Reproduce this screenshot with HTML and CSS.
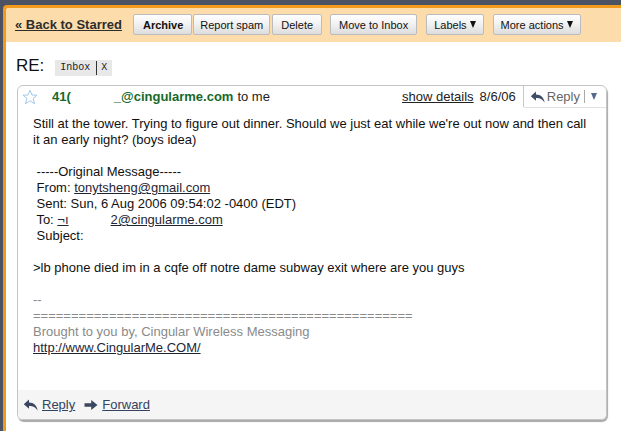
FILE: index.html
```html
<!DOCTYPE html>
<html>
<head>
<meta charset="utf-8">
<link rel="stylesheet" href="styles.css">
</head>
<body>
<div class="frame">
  <div class="shell">
    <div class="page">
      <div class="toolbar">
        <a class="back" href="#">« Back to Starred</a>
        <div class="group">
          <span class="btn bold">Archive</span><span class="btn">Report spam</span><span class="btn del">Delete</span>
        </div>
        <span class="btn wide move">Move to Inbox</span>
        <span class="btn wide">Labels <i class="tri"></i></span>
        <span class="btn wide">More actions <i class="tri"></i></span>
      </div>
      <div class="content">
        <div class="subject">
          <span class="re">RE:</span>
          <span class="chip">Inbox<span class="bar"></span>X</span>
        </div>
        <div class="card">
          <div class="head">
            <svg class="star" width="16" height="16" viewBox="0 0 16 16"><polygon points="8,1.2 10,6 15,6.2 11.1,9.4 12.6,14.8 8,11.8 3.4,14.8 4.9,9.4 1,6.2 6,6" fill="none" stroke="#a3c6ea" stroke-width="1"/></svg>
            <span class="sender">41(<span class="gap"></span>_@cingularme.com</span>
            <span class="tome">to me</span>
            <span class="spacer"></span>
            <a class="details" href="#">show details</a>
            <span class="date">8/6/06</span>
            <span class="replybtn">
              <svg width="16" height="14" viewBox="0 0 16 14"><path d="M6 1.5 L0.8 6.2 L6 10.8 V8 C10 8 12.6 9.2 14.6 12.8 C14.2 7.6 10.8 4.4 6 4.4 Z" fill="#3f4d66"/></svg>
              <span class="rtxt">Reply</span>
              <span class="vsep"></span>
              <i class="tri blue"></i>
            </span>
          </div>
          <div class="body">
            <p class="para">Still at the tower. Trying to figure out dinner. Should we just eat while we're out now and then call it an early night? (boys idea)</p>
            <div class="block">
              <div class="ln"> -----Original Message-----</div>
              <div class="ln"> From: <a href="#">tonytsheng@gmail.com</a></div>
              <div class="ln"> Sent: Sun, 6 Aug 2006 09:54:02 -0400 (EDT)</div>
              <div class="ln"> To: <a href="#">¬ı</a><span class="gap2"></span><a href="#">2@cingularme.com</a></div>
              <div class="ln"> Subject:</div>
            </div>
            <div class="block">
              <div class="ln">&gt;lb phone died im in a cqfe off notre dame subway exit where are you guys</div>
            </div>
            <div class="sig">
              <div class="ln grey">--</div>
              <div class="ln grey">==================================================</div>
              <div class="ln grey">Brought to you by, Cingular Wireless Messaging</div>
              <div class="ln"><a href="#">http://www.CingularMe.COM/</a></div>
            </div>
          </div>
          <div class="foot">
            <svg width="16" height="14" viewBox="0 0 16 14"><path d="M6 1.5 L0.8 6.2 L6 10.8 V8 C10 8 12.6 9.2 14.6 12.8 C14.2 7.6 10.8 4.4 6 4.4 Z" fill="#3b4760"/></svg>
            <a class="flink" href="#">Reply</a>
            <svg class="fwdicon" width="14" height="12" viewBox="0 0 14 12"><path d="M0.5 4.2 H7.2 V1 L13.5 6 L7.2 11 V7.8 H0.5 Z" fill="#3b4760"/></svg>
            <a class="flink" href="#">Forward</a>
          </div>
        </div>
      </div>
    </div>
  </div>
</div>
</body>
</html>
```
FILE: styles.css
```css
* { box-sizing: border-box; }
html, body { margin: 0; padding: 0; height: 100%; }
body {
  font-family: "Liberation Sans", Arial, sans-serif;
  font-size: 13px;
  color: #111;
  background: #4b5264;
  overflow: hidden;
}
.frame {
  height: 431px;
  padding: 5px 0 0 3px;
  background: #4b5264;
}
.shell {
  height: 100%;
  background: #f19a1c;
  padding: 3px 0 0 3px;
  border-top-left-radius: 4px;
}
.page {
  height: 100%;
  background: #fff;
  border-top-left-radius: 3px;
  display: flex;
  flex-direction: column;
  overflow: hidden;
}
.toolbar {
  height: 34px;
  flex: none;
  background: #fcdcab;
  border-top-left-radius: 3px;
  display: flex;
  align-items: flex-start;
  padding: 6px 0 0 9px;
}
.back {
  font-weight: bold;
  font-size: 13px;
  color: #2d2d2d;
  text-decoration: underline;
  line-height: 21px;
  margin-right: 11px;
}
.group { display: flex; gap: 1px; margin-right: 8px; }
.btn {
  display: inline-flex;
  align-items: center;
  height: 21px;
  padding: 0 6px;
  font-size: 11px;
  color: #111;
  background: linear-gradient(#ffffff, #f2f2f2 45%, #dddddd);
  border: 1px solid #bcbcbc;
  border-radius: 2px;
}
.btn.bold { font-weight: bold; padding: 0 8px 0 9px; }
.btn.del { padding: 0 8px; margin-left: 1px; }
.btn.wide { padding: 0 7px; margin-right: 9px; }
.btn.move { padding: 0 8px; }
.tri {
  display: inline-block;
  width: 0; height: 0;
  border-left: 3.5px solid transparent;
  border-right: 3.5px solid transparent;
  border-top: 7px solid #111;
  margin-left: 3px;
}
.tri.blue { border-top-color: #56698c; margin-left: 6px; }

.content {
  flex: 1;
  padding: 0 14px 0 10px;
  display: flex;
  flex-direction: column;
}
.subject {
  height: 43px;
  flex: none;
  display: flex;
  align-items: flex-end;
  padding-bottom: 9px;
}
.re { font-size: 17px; line-height: 20px; color: #111; }
.chip {
  margin-left: 11px;
  height: 16px;
  line-height: 16px;
  background: #e8e8e8;
  padding: 0 5px;
  font-family: "Liberation Mono", monospace;
  font-size: 10px;
  color: #222;
  display: inline-flex;
  align-items: center;
}
.chip .bar { width: 1px; height: 14px; background: #333; margin: 0 4px 0 6px; }

.card {
  margin-left: 1px;
  height: 335px;
  border: 1px solid #c4c4c4;
  border-radius: 6px;
  box-shadow: 1px 2px 1px #a8a8a8;
  display: flex;
  flex-direction: column;
  overflow: hidden;
}
.head {
  height: 21px;
  flex: none;
  display: flex;
  align-items: center;
  line-height: 21px;
}
.star { margin-left: 4px; }
.sender { margin-left: 14px; font-weight: bold; color: #16692a; }
.gap { display: inline-block; width: 43px; }
.tome { margin-left: 4px; color: #222; }
.spacer { flex: 1; }
.details { color: #222; text-decoration: underline; margin-right: 1px; }
.date { margin-left: 5px; margin-right: 7px; color: #222; }
.replybtn {
  height: 22px;
  align-self: flex-start;
  display: flex;
  align-items: center;
  padding: 0 9px 0 6px;
  border-left: 1px solid #c8c8c8;
  border-bottom: 1px solid #e2e2e2;
  border-bottom-left-radius: 2px;
  color: #666;
}
.rtxt { margin-left: 1px; font-size: 13px; color: #666; }
.vsep { width: 1px; height: 13px; background: #aaa; margin-left: 4px; }

.body {
  flex: 1;
  padding: 9px 15px 0 15px;
  line-height: 16px;
  color: #111;
}
.para { margin: 0 0 16px; }
.block { margin-bottom: 16px; }
.ln { white-space: pre; height: 16px; }
.gap2 { display: inline-block; width: 42px; }
.body a { color: #1e2636; text-decoration: underline; }
.grey { color: #8a8a8a; }

.foot {
  height: 29px;
  flex: none;
  background: #f5f5f5;
  display: flex;
  align-items: center;
  padding-left: 5px;
}
.flink { color: #34435f; text-decoration: underline; margin-left: 3px; }
.fwdicon { margin-left: 9px; margin-right: 1px; }
```
